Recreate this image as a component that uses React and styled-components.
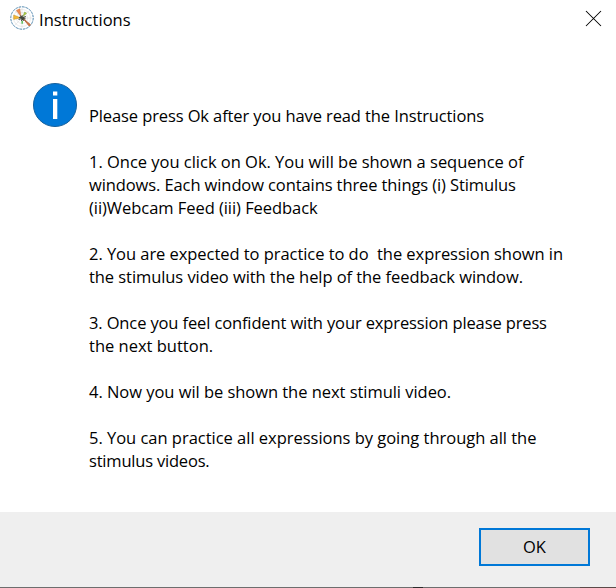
import React from 'react';
import styled, { createGlobalStyle } from 'styled-components';

const GlobalStyle = createGlobalStyle`
  * { box-sizing: border-box; }
  body { margin: 0; background: #fff; }
`;

const Dialog = styled.main`
  display: flex;
  flex-direction: column;
  width: 616px;
  height: 588px;
  overflow: hidden;
  background: #fff;
  color: #000;
  font: 16.5px/23px 'Open Sans', 'Noto Sans', sans-serif;
`;

const TitleBar = styled.header`
  display: flex;
  align-items: flex-start;
  height: 40px;
  padding: 6px 14px 0 10px;
`;

const Title = styled.h1`
  flex: 1;
  margin: 2px 0 0 5px;
  font: inherit;
  letter-spacing: 0.04px;
`;

const CloseButton = styled.button`
  display: flex;
  margin: 4px 0 0;
  padding: 0;
  border: 0;
  background: none;
`;

const Content = styled.section`
  display: flex;
  flex: 1;
  align-items: flex-start;
  padding: 42px 0 0 32px;
`;

const Message = styled.div`
  display: flex;
  flex-direction: column;
  gap: 23px;
  margin: 22px 0 0 11px;
`;

const Paragraph = styled.p`
  margin: 0;
`;

const Line = styled.span`
  display: block;
  white-space: pre;
  letter-spacing: ${(p) => p.$tracking}px;
`;

const Footer = styled.footer`
  display: flex;
  justify-content: flex-end;
  height: 75px;
  padding: 16px 26px 0 0;
  background: #efefef;
`;

const OkButton = styled.button`
  width: 111px;
  height: 38px;
  padding: 0 0 1px;
  border: 2px solid #0078d7;
  background: #e1e1e1;
  color: #000;
  font: inherit;
`;

const BottomEdge = styled.div`
  height: 1px;
  background: linear-gradient(
    to right,
    #6d6d6d 413px,
    #2b2b2b 413px 423px,
    #6d6d6d 423px 580px,
    #5b4a48 580px
  );
`;

const paragraphs = [
  [['Please press Ok after you have read the Instructions', -0.11]],
  [
    ['1. Once you click on Ok. You will be shown a sequence of', -0.02],
    ['windows. Each window contains three things (i) Stimulus', -0.1],
    ['(ii)Webcam Feed (iii) Feedback', -0.05],
  ],
  [
    ['2. You are expected to practice to do  the expression shown in', -0.05],
    ['the stimulus video with the help of the feedback window.', -0.07],
  ],
  [
    ['3. Once you feel confident with your expression please press', -0.13],
    ['the next button.', 0],
  ],
  [['4. Now you wil be shown the next stimuli video.', -0.04]],
  [
    ['5. You can practice all expressions by going through all the', -0.02],
    ['stimulus videos.', -0.2],
  ],
];

function AppIcon() {
  return (
    <svg width="24" height="24" viewBox="0 0 24 24">
      <circle cx="12" cy="12" r="11.2" fill="#fff" stroke="#4a83ab" strokeWidth="1" strokeDasharray="2.6 0.9" />
      <g fill="none" stroke="#dedede" strokeWidth="0.6">
        <circle cx="12" cy="12" r="8.5" />
        <circle cx="12" cy="12" r="5.5" />
        <path d="M12 2v20M2 12h20M5 5l14 14M19 5L5 19" />
      </g>
      <path d="M11 10.4L6.3 4.4L9.8 2.8Z" fill="#f08a4b" stroke="#c27346" strokeWidth="0.5" />
      <path d="M10.5 11.8L3.7 13.4L3.7 9Z" fill="#f7b733" stroke="#b9932a" strokeWidth="0.5" />
      <path d="M13 12.4L20.4 18.6L19.2 20Z" fill="#e07840" stroke="#b4683e" strokeWidth="0.9" />
      <path d="M13 10.4L14.6 6L16.6 7.2Z" fill="#b8d63c" stroke="#6f8f3a" strokeWidth="0.5" />
      <path d="M11.4 15h1.6v2.8h-1.6z" fill="#65c466" />
      <path d="M8.6 13.6L15.8 10.6M10.4 9.6L13.8 14.6M12.4 9.4L11.6 15M9 11.2L15.6 13" stroke="#3f4238" strokeWidth="1.1" />
    </svg>
  );
}

function InfoIcon() {
  return (
    <svg width="46" height="46" viewBox="0 0 46 46">
      <circle cx="23" cy="23" r="21.5" fill="#0078d7" stroke="#16609c" strokeWidth="1" />
      <path d="M21 9.5h4.3v4H21zM21 17h4.3v20H21z" fill="#fff" />
    </svg>
  );
}

function CloseIcon() {
  return (
    <svg width="17" height="17" viewBox="0 0 17 17">
      <path d="M1 1L16 16M16 1L1 16" stroke="#000" strokeWidth="1.05" />
    </svg>
  );
}

export default function App() {
  return (
    <>
      <GlobalStyle />
      <Dialog>
        <TitleBar>
          <AppIcon />
          <Title>Instructions</Title>
          <CloseButton aria-label="Close">
            <CloseIcon />
          </CloseButton>
        </TitleBar>
        <Content>
          <InfoIcon />
          <Message>
            {paragraphs.map((lines) => (
              <Paragraph key={lines[0][0]}>
                {lines.map(([text, tracking]) => (
                  <Line key={text} $tracking={tracking}>
                    {text}
                  </Line>
                ))}
              </Paragraph>
            ))}
          </Message>
        </Content>
        <Footer>
          <OkButton>OK</OkButton>
        </Footer>
        <BottomEdge />
      </Dialog>
    </>
  );
}
